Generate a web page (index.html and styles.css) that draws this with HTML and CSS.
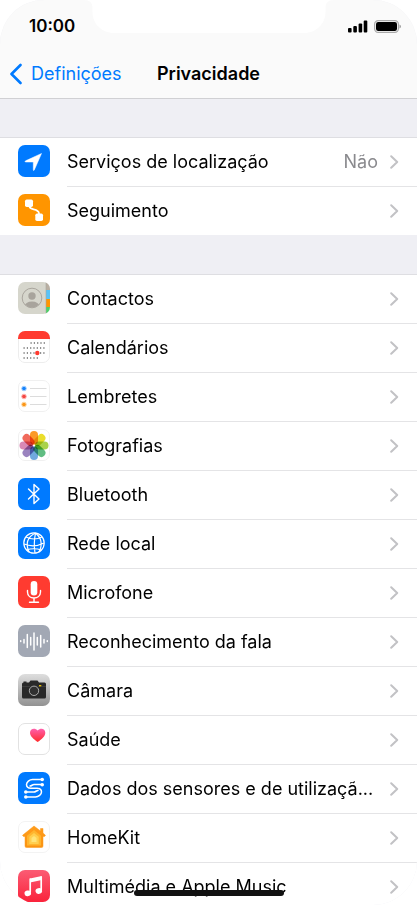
FILE: index.html
```html
<!DOCTYPE html>
<html lang="pt">
<head>
<meta charset="utf-8">
<meta name="viewport" content="width=device-width, initial-scale=1">
<title>Privacidade</title>
<link rel="stylesheet" href="styles.css">
</head>
<body>
<svg class="defs" width="0" height="0" aria-hidden="true">
  <defs>
    <symbol id="chevron" viewBox="0 0 9 14"><path d="M1.200 1.200 7.200 7 1.200 12.800" fill="none" stroke="#c2c2c5" stroke-width="2" stroke-linecap="round" stroke-linejoin="round"/></symbol>
    <linearGradient id="camera-bg" x1="0" y1="0" x2="0" y2="1"><stop offset="0" stop-color="#dedede"/><stop offset="1" stop-color="#929292"/></linearGradient>
    <linearGradient id="heart-fill" x1="0" y1="0" x2="0" y2="1"><stop offset="0" stop-color="#ff5fac"/><stop offset="1" stop-color="#ff2b2b"/></linearGradient>
    <linearGradient id="music-bg" x1="0" y1="0" x2="0" y2="1"><stop offset="0" stop-color="#fb5c74"/><stop offset="1" stop-color="#fa233b"/></linearGradient>
    <linearGradient id="house-fill" x1="0" y1="0" x2="0" y2="1"><stop offset="0" stop-color="#ff9d1c"/><stop offset="1" stop-color="#fb9312"/></linearGradient>
    <clipPath id="tile"><rect width="32" height="32" rx="7"/></clipPath>
    <clipPath id="avatar"><circle cx="14" cy="16" r="9.500"/></clipPath>
  </defs>
</svg>
<div class="screen">
  <header class="top">
    <svg class="notch" width="250" height="34" viewBox="0 0 250 34" aria-hidden="true"><path d="M0 0C6 0 8.500 3 8.500 8V12C8.500 24 18 33 30 33H220C232 33 241.500 24 241.500 12V8C241.500 3 244 0 250 0Z" fill="#fff"/></svg>
    <div class="status">
      <time class="clock">10:00</time>
      <div class="signals">
        <svg width="20" height="13" viewBox="0 0 20 13" aria-label="Rede"><rect x="0" y="8" width="3.600" height="4.500" rx="1"/><rect x="5.300" y="6" width="3.600" height="6.500" rx="1"/><rect x="10.600" y="3.500" width="3.600" height="9" rx="1"/><rect x="15.700" y="0.500" width="3.600" height="12" rx="1"/></svg>
        <svg width="27" height="13" viewBox="0 0 27 13" aria-label="Bateria"><rect x=".6" y=".6" width="23.800" height="11.800" rx="3.600" fill="none" stroke="#aaa" stroke-width="1.200"/><rect x="2" y="2" width="21" height="9" rx="2.200"/><path d="M25.500 4.500q1.400.6 1.400 2t-1.400 2z" fill="#999"/></svg>
      </div>
    </div>
    <nav class="bar">
      <a class="back" href="#"><svg width="13" height="22" viewBox="0 0 13 22" aria-hidden="true"><path d="M11.500 2 2.500 11l9 9" fill="none" stroke="#007aff" stroke-width="2.600" stroke-linecap="round" stroke-linejoin="round"/></svg>Definições</a>
      <h1>Privacidade</h1>
    </nav>
  </header>
  <main>
    <ul class="group group-location">
      <li><a class="row" href="#">
        <svg class="icon" viewBox="0 0 32 32"><rect width="32" height="32" rx="7" fill="#007aff"/><path d="M23.500 8.500 16.300 25q-1 1.200-1-.4V17H8q-2-.2-.4-1.200Z" fill="#fff" stroke="#fff" stroke-width=".5" stroke-linejoin="round"/></svg>
        <span class="body"><span class="label">Serviços de localização</span><span class="value">Não</span><svg class="chevron"><use href="#chevron"/></svg></span></a></li>
      <li><a class="row" href="#">
        <svg class="icon" viewBox="0 0 32 32"><rect width="32" height="32" rx="7" fill="#ff9500"/><path d="M11.500 10v2.500c0 4 9.500 1.500 9.500 7V22" fill="none" stroke="#fff" stroke-width="1.700"/><rect x="7" y="5.500" width="8" height="7.500" rx="1.700" fill="#fff"/><rect x="17.300" y="19.500" width="7.700" height="7.500" rx="1.700" fill="#fff"/></svg>
        <span class="body"><span class="label">Seguimento</span><svg class="chevron"><use href="#chevron"/></svg></span></a></li>
    </ul>
    <ul class="group">
      <li><a class="row" href="#">
        <svg class="icon" viewBox="0 0 32 32"><g clip-path="url(#tile)"><rect width="32" height="32" fill="#d6d6cc"/><path d="M28 0h4v8h-4z" fill="#b9afa2"/><path d="M28 8h4v9h-4z" fill="#5ac3f7"/><path d="M28 17h4v8h-4z" fill="#ff9500"/><path d="M28 25h4v7h-4z" fill="#4cd267"/><path d="M28 0v32" stroke="#a6a69d" stroke-width=".6"/></g><g clip-path="url(#avatar)" fill="#a8a49c"><circle cx="14" cy="14" r="3.700"/><ellipse cx="14" cy="24.500" rx="7.500" ry="5"/></g><circle cx="14" cy="16" r="9.800" fill="none" stroke="#aaa69e"/></svg>
        <span class="body"><span class="label">Contactos</span><svg class="chevron"><use href="#chevron"/></svg></span></a></li>
      <li><a class="row" href="#">
        <svg class="icon" viewBox="0 0 32 32"><rect x=".5" y=".5" width="31" height="31" rx="6.500" fill="#fff" stroke="#ededed"/><path d="M0 8V7a7 7 0 0 1 7-7h18a7 7 0 0 1 7 7v1z" fill="#ff3b30"/><path d="M12.500 12H27M5.500 17H27M5.500 22H27M5.500 27H20" stroke="#222" stroke-width="1.200" stroke-dasharray="1.200 2.100"/><circle cx="19.300" cy="22" r="2.200" fill="#ff3b30"/></svg>
        <span class="body"><span class="label">Calendários</span><svg class="chevron"><use href="#chevron"/></svg></span></a></li>
      <li><a class="row" href="#">
        <svg class="icon" viewBox="0 0 32 32"><rect x=".5" y=".5" width="31" height="31" rx="6.500" fill="#fff" stroke="#f0f0f0"/><path d="M12 8.500h16.500M12 16.500h16.500M12 24.500h16.500" stroke="#dcdcdc"/><g stroke-width="1"><circle cx="6" cy="8.500" r="2.300" fill="#1683fb" stroke="#a7d1ff"/><circle cx="6" cy="16.500" r="2.300" fill="#f34743" stroke="#ffb5b1"/><circle cx="6" cy="24.500" r="2.300" fill="#fb9619" stroke="#ffd8a1"/></g></svg>
        <span class="body"><span class="label">Lembretes</span><svg class="chevron"><use href="#chevron"/></svg></span></a></li>
      <li><a class="row" href="#">
        <svg class="icon" viewBox="0 0 32 32"><rect x=".5" y=".5" width="31" height="31" rx="6.500" fill="#fff" stroke="#f0f0f0"/><g class="petals"><rect x="12" y="2" width="8" height="13.500" rx="4" fill="#fb9a25"/><rect x="12" y="2" width="8" height="13.500" rx="4" fill="#eadd2b" transform="rotate(45 16 16.500)"/><rect x="12" y="2" width="8" height="13.500" rx="4" fill="#a9d24a" transform="rotate(90 16 16.500)"/><rect x="12" y="2" width="8" height="13.500" rx="4" fill="#60bd82" transform="rotate(135 16 16.500)"/><rect x="12" y="2" width="8" height="13.500" rx="4" fill="#70a9df" transform="rotate(180 16 16.500)"/><rect x="12" y="2" width="8" height="13.500" rx="4" fill="#9a83bf" transform="rotate(225 16 16.500)"/><rect x="12" y="2" width="8" height="13.500" rx="4" fill="#d889b5" transform="rotate(270 16 16.500)"/><rect x="12" y="2" width="8" height="13.500" rx="4" fill="#f06a5b" transform="rotate(315 16 16.500)"/></g></svg>
        <span class="body"><span class="label">Fotografias</span><svg class="chevron"><use href="#chevron"/></svg></span></a></li>
      <li><a class="row" href="#">
        <svg class="icon" viewBox="0 0 32 32"><rect width="32" height="32" rx="7" fill="#007aff"/><path d="m10.500 11 10.500 10-5 4.500v-19l5 4.500-10.500 10" fill="none" stroke="#fff" stroke-width="1.400" stroke-linejoin="round" stroke-linecap="round"/></svg>
        <span class="body"><span class="label">Bluetooth</span><svg class="chevron"><use href="#chevron"/></svg></span></a></li>
      <li><a class="row" href="#">
        <svg class="icon" viewBox="0 0 32 32"><rect width="32" height="32" rx="7" fill="#007aff"/><g fill="none" stroke="#fff" stroke-width="1.200"><circle cx="16" cy="16" r="10.200"/><path d="M17.500 6c-8 4-10 11-6.500 19M17.500 6c-1 5-1.500 14-.5 20M17.500 6c6 5 7 12 3.500 19M8 10q8 4 16 0M6 17q10 4 20-1M8.500 23q7-2.500 15 0"/></g></svg>
        <span class="body"><span class="label">Rede local</span><svg class="chevron"><use href="#chevron"/></svg></span></a></li>
      <li><a class="row" href="#">
        <svg class="icon" viewBox="0 0 32 32"><rect width="32" height="32" rx="7" fill="#ff3b30"/><rect x="12.700" y="5" width="6.600" height="14.500" rx="3.300" fill="#fff"/><path d="M9.500 14.500V16c0 8 13 8 13 0v-1.500M16 22v4M11.500 26.300h9" fill="none" stroke="#fff" stroke-width="1.400" stroke-linecap="round"/></svg>
        <span class="body"><span class="label">Microfone</span><svg class="chevron"><use href="#chevron"/></svg></span></a></li>
      <li><a class="row" href="#">
        <svg class="icon" viewBox="0 0 32 32"><rect width="32" height="32" rx="7" fill="#a2a8b4"/><path d="M2.700 15.800v.8M6 14.500v3.500M9.300 9.500v13M12.700 12.500v7.500M16 8v17M19.300 12.500v7.500M22.700 10.500v11.500M26 14.500v3.500M29.300 15.800v.8" stroke="#fff" stroke-width="1.500" stroke-linecap="round"/></svg>
        <span class="body"><span class="label">Reconhecimento da fala</span><svg class="chevron"><use href="#chevron"/></svg></span></a></li>
      <li><a class="row" href="#">
        <svg class="icon" viewBox="0 0 32 32"><rect width="32" height="32" rx="7" fill="url(#camera-bg)"/><path d="M5.500 8.500V7.500h3v1h2.500l1.500-2h7l1.500 2h5.500q1.500 0 1.500 1.500v13q0 1.500-1.500 1.500h-21Q4 24.500 4 23V10q0-1.500 1.500-1.500z" fill="#292929"/><path d="M4 12.500h24" stroke="#494949" stroke-width=".6"/><circle cx="16" cy="16.800" r="5.900" fill="#292929"/><circle cx="16" cy="16.800" r="4.700" fill="#303030" stroke="#aaa" stroke-width="1"/><path d="M21 11.700h2.300" stroke="#f3c800" stroke-width="1.300"/></svg>
        <span class="body"><span class="label">Câmara</span><svg class="chevron"><use href="#chevron"/></svg></span></a></li>
      <li><a class="row" href="#">
        <svg class="icon" viewBox="0 0 32 32"><rect x=".5" y=".5" width="31" height="31" rx="6.500" fill="#fff" stroke="#e2e2e2"/><path d="M19.700 19C15.500 16 12 13.300 12 9.700 12 5.500 17 4.300 19.700 7.600 22.400 4.300 27.300 5.500 27.300 9.700c0 3.600-3.400 6.300-7.600 9.300z" fill="url(#heart-fill)"/></svg>
        <span class="body"><span class="label">Saúde</span><svg class="chevron"><use href="#chevron"/></svg></span></a></li>
      <li><a class="row" href="#">
        <svg class="icon" viewBox="0 0 32 32"><rect width="32" height="32" rx="7" fill="#007aff"/><g fill="none" stroke="#fff" stroke-width="1.500" stroke-linecap="round"><path d="M24 7.500h-9.500c-3 0-6 2.500-6 5s2 3.700 4.500 3.700h6.500M24 12.500h-8c-1.500 0-2.500 1.500-4 1.500M8 20h8c1.500 0 2.500-1.500 4-1.500M8 25h9.500c3 0 6-2.500 6-5s-2-3.800-4.500-3.800"/></g><g fill="#fff"><circle cx="24.200" cy="7.500" r="1.800"/><circle cx="24.200" cy="12.800" r="1.800"/><circle cx="7.800" cy="20" r="1.800"/><circle cx="7.800" cy="25" r="1.800"/></g></svg>
        <span class="body"><span class="label">Dados dos sensores e de utilizaçã...</span><svg class="chevron"><use href="#chevron"/></svg></span></a></li>
      <li><a class="row" href="#">
        <svg class="icon" viewBox="0 0 32 32"><rect x=".5" y=".5" width="31" height="31" rx="6.500" fill="#fff" stroke="#f3f3f3"/><path d="M16 5 4.500 14.300l1 1.200H7V25q0 1.500 1.500 1.500h15Q25 26.500 25 25v-9.500h1.500l1-1.200L25 12V7.500h-2.500V10z" fill="url(#house-fill)" stroke="#fb9818" stroke-width=".5" stroke-linejoin="round"/><path d="m16 9-7 5.700v9.800h14v-9.800z" fill="#ffb52e"/><path d="m16 12-4.700 3.800V23h9.400v-7.200z" fill="#ffcf50"/><path d="m16 15-2.500 2v4h5v-4z" fill="#ffe47a"/></svg>
        <span class="body"><span class="label">HomeKit</span><svg class="chevron"><use href="#chevron"/></svg></span></a></li>
      <li><a class="row" href="#">
        <svg class="icon" viewBox="0 0 32 32"><rect width="32" height="32" rx="7" fill="url(#music-bg)"/><path d="M12 8.500 23.800 6v4L12 12.500z" fill="#fff"/><path d="M12.200 8.500v14M23.200 6.500v14" stroke="#fff" stroke-width="1.700"/><g fill="#fff"><ellipse cx="9.800" cy="23.300" rx="3.300" ry="2.800" transform="rotate(-15 9.800 23.300)"/><ellipse cx="20.800" cy="21" rx="3.300" ry="2.800" transform="rotate(-15 20.800 21)"/></g></svg>
        <span class="body"><span class="label">Multimédia e Apple Music</span><svg class="chevron"><use href="#chevron"/></svg></span></a></li>
    </ul>
  </main>
  <div class="home-bar"></div>
</div>
</body>
</html>
```
FILE: styles.css
```css
* { box-sizing: border-box; }

body {
  margin: 0;
  background: #fff;
  color: #000;
  font-family: Inter, "Liberation Sans", sans-serif;
  font-size: 18px;
  line-height: 24px;
}

.defs { position: absolute; }

.screen {
  position: relative;
  height: 100vh;
  overflow: hidden;
  border-radius: 44px;
  background: #efeff4;
}

.top {
  position: relative;
  background: #fafafa;
  border-bottom: 1px solid #d0d0d3;
}

.notch {
  position: absolute;
  top: 0;
  left: 50%;
  transform: translateX(-50%);
}

.status {
  display: flex;
  align-items: center;
  justify-content: space-between;
  height: 50px;
  padding: 2px 16px 0 29px;
}

.clock {
  font-size: 17px;
  font-weight: 600;
}

.signals {
  display: flex;
  gap: 6px;
}

.bar {
  display: grid;
  grid-template-columns: 1fr auto 1fr;
  align-items: center;
  height: 48px;
  padding: 0 9px;
}

.back {
  display: flex;
  align-items: center;
  gap: 9px;
  color: #007aff;
  text-decoration: none;
}

h1 {
  margin: 0;
  font-size: 18px;
  font-weight: 600;
}

.group {
  margin: 39px 0 0;
  padding: 0;
  border-top: 1px solid #dedee2;
  background: #fff;
  list-style: none;
}

.group-location { margin-top: 38px; }

.row {
  display: flex;
  align-items: flex-start;
  gap: 17px;
  height: 49px;
  padding: 0 0 0 18px;
  color: inherit;
  text-decoration: none;
}

.group li:last-child .row { height: 48px; }

.icon {
  flex: none;
  width: 32px;
  height: 32px;
  margin-top: 7px;
}

.petals rect { mix-blend-mode: multiply; }

.body {
  display: flex;
  flex: 1;
  align-items: center;
  gap: 12px;
  align-self: stretch;
  min-width: 0;
  padding-right: 18px;
  border-bottom: 1px solid #e4e4e6;
}

.group li:last-child .body { border-bottom: 0; }

.label {
  flex: 1;
  overflow: hidden;
  white-space: nowrap;
  text-overflow: ellipsis;
}

.value { color: #8a8a8e; }

.chevron {
  flex: none;
  width: 9px;
  height: 14px;
}

.home-bar {
  position: absolute;
  bottom: 9px;
  left: 50%;
  width: 150px;
  height: 6px;
  border-radius: 3px;
  background: #111;
  transform: translateX(-50%);
}
```
